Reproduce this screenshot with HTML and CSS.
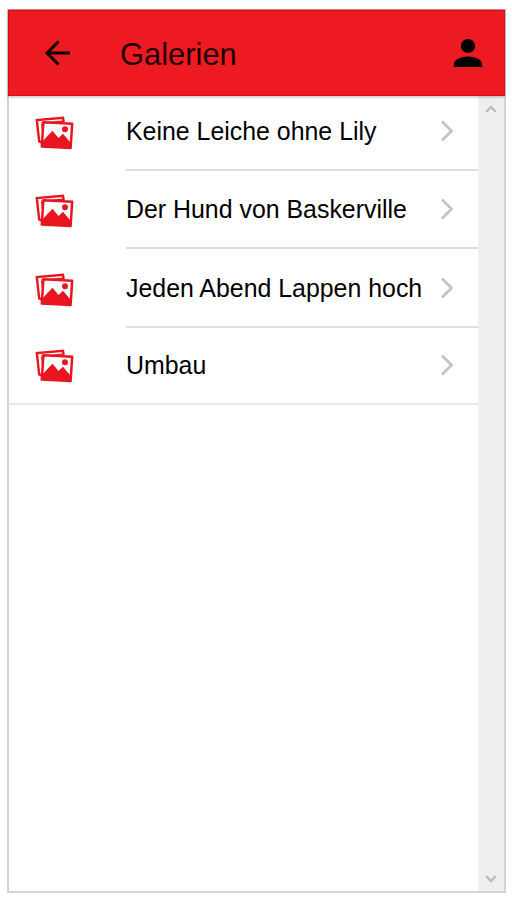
FILE: index.html
```html
<!DOCTYPE html>
<html lang="de">
<head>
<meta charset="utf-8">
<title>Galerien</title>
<link rel="stylesheet" href="styles.css">
</head>
<body>
<svg class="defs" width="0" height="0" aria-hidden="true">
  <symbol id="photos" viewBox="0 0 40 36">
    <path d="M6.5 26.5 4.2 25.4 1.8 4.1 28 1.8 28.7 6" fill="none" stroke="currentColor" stroke-width="2.4"/>
    <path d="M6 7 28 5.2M6.6 8 8.6 25" fill="none" stroke="currentColor" stroke-width="1.2"/>
    <path d="M8.4 6.2 37.2 7.7 35.6 32 6.8 30.5Z" fill="#fff" stroke="currentColor" stroke-width="2.5" stroke-linejoin="round"/>
    <path d="M6.5 26.5 12 20.5 17.5 14.8 23.5 22 28 17.8 35.4 26.5 35.2 32.5 6.5 31Z" fill="currentColor"/>
    <circle cx="30" cy="13.3" r="3" fill="currentColor"/>
  </symbol>
  <symbol id="chevron" viewBox="0 0 14 24">
    <path d="M2 2.5 11.5 12 2 21.5" fill="none" stroke="currentColor" stroke-width="2.7"/>
  </symbol>
</svg>
<div class="app">
  <header class="bar">
    <svg class="back" viewBox="0 0 26 26"><path d="M25 13H2M13.5 1.5 2 13 13.5 24.5" fill="none" stroke="currentColor" stroke-width="3"/></svg>
    <h1 class="title">Galerien</h1>
    <svg class="user" viewBox="4 4 16 16"><path d="M12 12c2.21 0 4-1.79 4-4s-1.79-4-4-4-4 1.79-4 4 1.79 4 4 4zm0 2c-2.67 0-8 1.34-8 4v2h16v-2c0-2.66-5.33-4-8-4z" fill="currentColor"/></svg>
  </header>
  <div class="body">
    <main class="content">
      <ul class="list">
        <li class="row"><svg class="photos"><use href="#photos"/></svg><div class="cell"><span>Keine Leiche ohne Lily</span><svg class="chevron"><use href="#chevron"/></svg></div></li>
        <li class="row"><svg class="photos"><use href="#photos"/></svg><div class="cell"><span>Der Hund von Baskerville</span><svg class="chevron"><use href="#chevron"/></svg></div></li>
        <li class="row"><svg class="photos"><use href="#photos"/></svg><div class="cell"><span>Jeden Abend Lappen hoch</span><svg class="chevron"><use href="#chevron"/></svg></div></li>
        <li class="row"><svg class="photos"><use href="#photos"/></svg><div class="cell"><span>Umbau</span><svg class="chevron"><use href="#chevron"/></svg></div></li>
      </ul>
    </main>
    <div class="scrollbar">
      <svg class="arrow" viewBox="0 0 12 10"><path d="M1.2 8 6 3 10.8 8" fill="none" stroke="currentColor" stroke-width="2.5"/></svg>
      <svg class="arrow" viewBox="0 0 12 10"><path d="M1.2 2 6 7 10.8 2" fill="none" stroke="currentColor" stroke-width="2.5"/></svg>
    </div>
  </div>
</div>
</body>
</html>
```
FILE: styles.css
```css
* { box-sizing: border-box; }

body {
  margin: 0;
  height: 900px;
  padding: 9px 6px 7px 7px;
  background: #fff;
  color: #000;
  font-family: "Liberation Sans", Arial, sans-serif;
  overflow: hidden;
}

.defs { display: none; }

.app {
  display: flex;
  flex-direction: column;
  height: 884px;
  border: 2px solid #d3d3d3;
  border-top: 1px solid #d98a8c;
}

.bar {
  display: flex;
  align-items: center;
  height: 86px;
  margin: 0 -1px;
  padding: 0 22px 0 36px;
  background: #ed1a21;
  border: 1px solid #e00a12;
  box-shadow: 0 1px 3px rgba(60, 80, 90, .4);
  position: relative;
}

.back { width: 26px; height: 26px; }

.title {
  flex: 1;
  margin: 4px 0 0 49px;
  font-size: 30.9px;
  font-weight: 400;
  line-height: 36px;
  color: #210003;
}

.user { width: 28px; height: 28px; }

.body { flex: 1; display: flex; min-height: 0; }

.content { flex: 1; }

.list {
  list-style: none;
  margin: 0;
  padding: 0;
  height: 309px;
  display: grid;
  grid-template-rows: 75px 78px 79px 77px;
  border-bottom: 2px solid #e6e6e6;
}

.row { display: flex; align-items: center; padding-left: 26px; }

.photos { width: 40px; height: 36px; color: #e91520; margin-top: 3px; }

.cell {
  flex: 1;
  height: 100%;
  display: flex;
  align-items: center;
  justify-content: space-between;
  margin-left: 51px;
  padding-right: 24px;
  border-bottom: 2px solid #dfdfdf;
  font-size: 24.9px;
  line-height: 30px;
  white-space: nowrap;
}

.row:first-child .cell { padding-bottom: 3px; }
.row:first-child .photos { margin-top: 0; }
.row:nth-child(3) .photos { margin-top: 5px; }

.row:last-child .cell { border-bottom: 0; padding-bottom: 3px; }
.row:last-child .photos { margin-top: 0; }

.chevron { width: 14px; height: 24px; color: #c3c3c3; }

.scrollbar {
  width: 26px;
  background: #efefef;
  display: flex;
  flex-direction: column;
  align-items: center;
  justify-content: space-between;
  padding: 8px 0 7px;
}

.arrow { width: 12px; height: 10px; color: #bcbcbc; }
```
